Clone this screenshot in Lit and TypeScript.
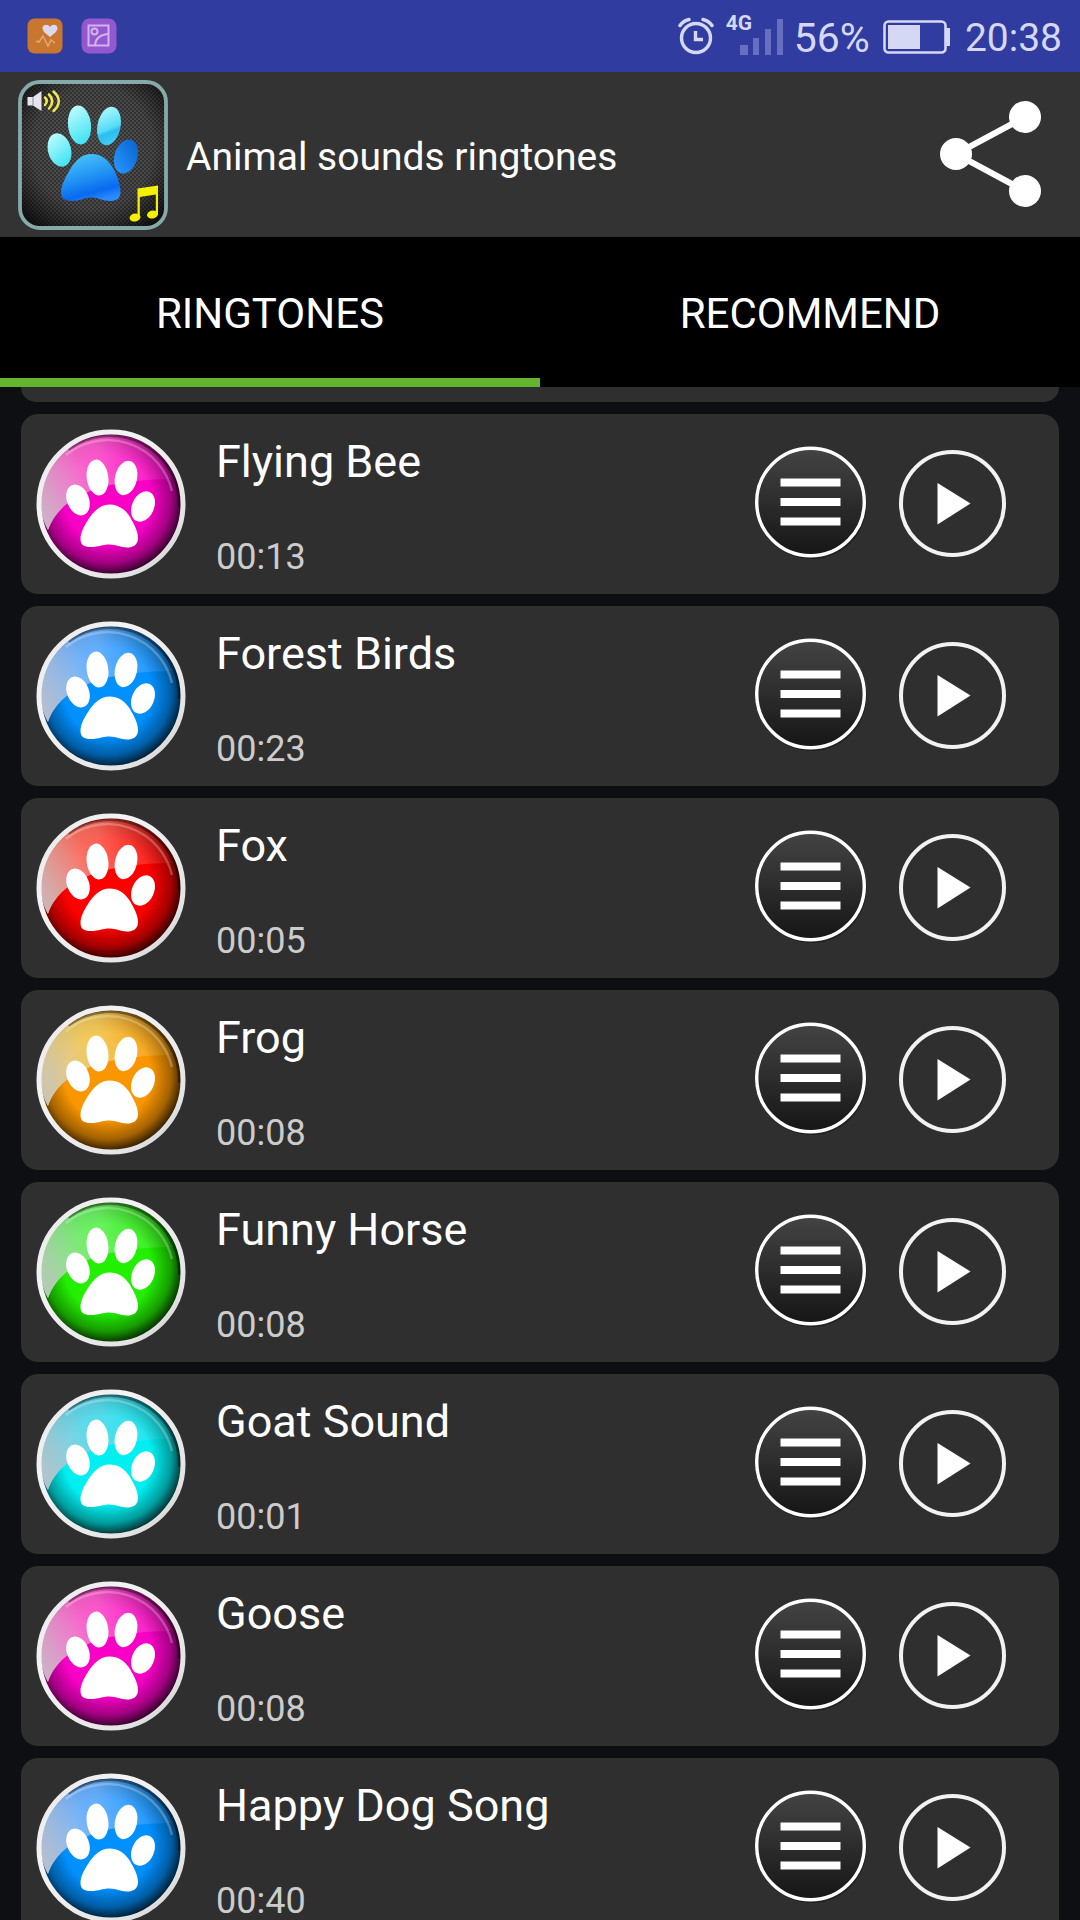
import { LitElement, html, css, svg } from "lit";
import { customElement, property, state } from "lit/decorators.js";

interface Paint {
  base: string;
  tint: string;
}

interface Sound {
  name: string;
  time: string;
  paint: Paint;
}

const MAGENTA: Paint = { base: "#f800c6", tint: "#ff7ad0" };
const BLUE: Paint = { base: "#0090ff", tint: "#8abcff" };
const RED: Paint = { base: "#fd0000", tint: "#ff8a78" };
const ORANGE: Paint = { base: "#fa9600", tint: "#f2da78" };
const GREEN: Paint = { base: "#22f000", tint: "#84f284" };
const CYAN: Paint = { base: "#00f0f2", tint: "#78d4ea" };

const SOUNDS: Sound[] = [
  { name: "Flying Bee", time: "00:13", paint: MAGENTA },
  { name: "Forest Birds", time: "00:23", paint: BLUE },
  { name: "Fox", time: "00:05", paint: RED },
  { name: "Frog", time: "00:08", paint: ORANGE },
  { name: "Funny Horse", time: "00:08", paint: GREEN },
  { name: "Goat Sound", time: "00:01", paint: CYAN },
  { name: "Goose", time: "00:08", paint: MAGENTA },
  { name: "Happy Dog Song", time: "00:40", paint: BLUE },
];

@customElement("paw-badge")
class PawBadge extends LitElement {
  @property({ attribute: false }) paint: Paint = BLUE;

  static styles = css`
    :host {
      display: block;
      flex: none;
    }
    .badge {
      display: block;
      width: 150px;
      height: 150px;
    }
  `;

  render() {
    const { base, tint } = this.paint;
    return html`<svg class="badge" viewBox="0 0 150 150" aria-hidden="true">
      <defs>
        <radialGradient id="shade" gradientUnits="userSpaceOnUse" cx="72" cy="71" r="79">
          <stop offset="0.55" stop-color="#000" stop-opacity="0"></stop>
          <stop offset="0.8" stop-color="#000" stop-opacity="0.35"></stop>
          <stop offset="1" stop-color="#000" stop-opacity="0.95"></stop>
        </radialGradient>
        <linearGradient id="gloss" gradientUnits="userSpaceOnUse" x1="8" y1="80" x2="136" y2="50">
          <stop offset="0" stop-color=${tint} stop-opacity="0.9"></stop>
          <stop offset="0.5" stop-color=${tint} stop-opacity="0.7"></stop>
          <stop offset="0.8" stop-color=${tint} stop-opacity="0.3"></stop>
          <stop offset="1" stop-color=${tint} stop-opacity="0.05"></stop>
        </linearGradient>
        <linearGradient id="haze" gradientUnits="userSpaceOnUse" x1="8" y1="90" x2="62" y2="50">
          <stop offset="0" stop-color="#c4c2c6" stop-opacity="0.8"></stop>
          <stop offset="0.4" stop-color="#c4c2c6" stop-opacity="0.5"></stop>
          <stop offset="1" stop-color="#c4c2c6" stop-opacity="0"></stop>
        </linearGradient>
        <linearGradient id="rim" x1="0" y1="0" x2="1" y2="1">
          <stop offset="0" stop-color="#e6e6e6"></stop>
          <stop offset="0.3" stop-color="#f4f4f4"></stop>
          <stop offset="0.8" stop-color="#e4e4e4"></stop>
          <stop offset="1" stop-color="#c9c9c9"></stop>
        </linearGradient>
      </defs>
      <circle cx="75" cy="75" r="71" fill=${base}></circle>
      <circle cx="75" cy="75" r="71" fill="url(#shade)"></circle>
      <path d="M12 101C24 68 62 50 141 50C133 22 106 6 75 6C36 6 5 37 5 75C5 85 8 94 12 101Z" fill="url(#gloss)"></path>
      <path d="M12 101C24 68 62 50 141 50C133 22 106 6 75 6C36 6 5 37 5 75C5 85 8 94 12 101Z" fill="url(#haze)"></path>
      <path d="M30 26A66 66 0 0 1 136 62" fill="none" stroke="#fff" stroke-opacity="0.25" stroke-width="2.5"></path>
      <path d="M32 20A70 70 0 0 1 144 78" fill="none" stroke="#000" stroke-opacity="0.4" stroke-width="4"></path>
      <circle cx="75" cy="75" r="72" fill="none" stroke="url(#rim)" stroke-width="5"></circle>
      <g fill="#fff">
        <ellipse cx="42" cy="71" rx="11" ry="16" transform="rotate(-22 42 71)"></ellipse>
        <ellipse cx="61.5" cy="48.5" rx="10.8" ry="18" transform="rotate(-8 61.5 48.5)"></ellipse>
        <ellipse cx="90" cy="49" rx="11" ry="17.5" transform="rotate(13 90 49)"></ellipse>
        <ellipse cx="107" cy="77.5" rx="11" ry="16" transform="rotate(24 107 77.5)"></ellipse>
        <path d="M73.5 75.5C82 75.5 89 80 94 88C98 95 102 102 102 109C102 116 97 118.5 91 118.5C84 118.5 81 115.5 73.5 115.5C66 115.5 63 118 55 118C48 118 44.5 116 44.5 110C44.5 104 48 97 52 91C57 83 64 75.5 73.5 75.5Z"></path>
      </g>
    </svg>`;
  }
}

@customElement("sound-row")
class SoundRow extends LitElement {
  @property({ attribute: false }) sound!: Sound;

  static styles = css`
    :host {
      display: block;
    }
    .card {
      display: flex;
      align-items: center;
      box-sizing: border-box;
      height: 180px;
      padding: 0 52px 0 15px;
      border-radius: 17px;
      background: #2f2f2f;
    }
    .text {
      flex: 1;
      min-width: 0;
      padding: 3px 0 0 30px;
    }
    .name {
      margin: 0 0 51px;
      font-size: 45px;
      line-height: 52px;
      font-weight: 400;
      color: #fff;
      white-space: nowrap;
    }
    .time {
      margin: 0;
      font-size: 36px;
      line-height: 36px;
      color: #ccc;
    }
    .actions {
      display: flex;
      align-items: center;
      gap: 32px;
    }
    .action {
      display: block;
      padding: 0;
      border: 0;
      border-radius: 50%;
      background: none;
      cursor: pointer;
    }
    .menu {
      display: block;
      width: 112px;
      height: 116px;
    }
    .play {
      display: block;
      width: 108px;
      height: 108px;
    }
  `;

  render() {
    const { name, time, paint } = this.sound;
    return html`<article class="card">
      <paw-badge .paint=${paint}></paw-badge>
      <div class="text">
        <h2 class="name">${name}</h2>
        <p class="time">${time}</p>
      </div>
      <div class="actions">
        <button class="action" aria-label="Options for ${name}">
          <svg class="menu" viewBox="0 0 112 116">
            <defs>
              <linearGradient id="face" x1="0" y1="0" x2="0" y2="1">
                <stop offset="0" stop-color="#444"></stop>
                <stop offset="1" stop-color="#151515"></stop>
              </linearGradient>
            </defs>
            <circle cx="56.5" cy="58" r="55" fill="#1c1c1c" fill-opacity="0.8"></circle>
            <circle cx="55.5" cy="56" r="53.8" fill="url(#face)" stroke="#fff" stroke-width="3.4"></circle>
            <path d="M25.5 32.5h60v8h-60zM25.5 52h60v8h-60zM25.5 71.5h60v8h-60z" fill="#fff"></path>
          </svg>
        </button>
        <button class="action" aria-label="Play ${name}">
          <svg class="play" viewBox="0 0 108 108">
            <circle cx="53.5" cy="53.5" r="51.5" fill="none" stroke="#f2f2f2" stroke-width="4"></circle>
            <path d="M38.5 33L71.5 53.5L38.5 74.5Z" fill="#fff"></path>
          </svg>
        </button>
      </div>
    </article>`;
  }
}

const alarmIcon = svg`
  <g fill="none" stroke="#d5d8f5" stroke-width="3.4" stroke-linecap="round">
    <circle cx="18" cy="21" r="14.5"></circle>
    <path d="M17.5 14V22.5H25" stroke-linecap="butt"></path>
    <path d="M2 8.5Q5 4 11 2.5M34 8.5Q31 4 25 2.5"></path>
  </g>`;

@customElement("app-root")
class AppRoot extends LitElement {
  @state() private tab = 0;

  static styles = css`
    :host {
      display: flex;
      flex-direction: column;
      height: 100vh;
      overflow: hidden;
      background: #0e0f13;
      color: #fff;
      font-family: Roboto, "Liberation Sans", sans-serif;
    }
    .status {
      display: flex;
      flex: none;
      align-items: center;
      justify-content: space-between;
      height: 72px;
      padding: 0 18px 0 27px;
      background: #303c9f;
      color: #d5d8f5;
      line-height: 48px;
    }
    .notices,
    .system {
      display: flex;
      align-items: center;
    }
    .notices {
      gap: 18px;
    }
    .notice {
      display: block;
      width: 36px;
      height: 36px;
    }
    .alarm {
      width: 36px;
      height: 38px;
      margin-right: 12px;
    }
    .network {
      display: flex;
      align-items: flex-start;
      height: 46px;
      margin-right: 10px;
    }
    .generation {
      width: 14px;
      font-size: 21px;
      line-height: 20px;
      font-weight: 700;
      white-space: nowrap;
    }
    .signal {
      width: 44px;
      height: 46px;
    }
    .percent,
    .clock {
      padding-top: 4px;
    }
    .percent {
      font-size: 41px;
    }
    .clock {
      font-size: 39px;
    }
    .battery {
      width: 68px;
      height: 34px;
      margin: 2px 14px 0 13px;
    }
    .header {
      display: flex;
      flex: none;
      align-items: center;
      height: 165px;
      padding: 0 37px 0 18px;
      background: #333;
    }
    .logo {
      flex: none;
      width: 150px;
      height: 150px;
    }
    .title {
      flex: 1;
      margin: 4px 0 0 18px;
      font-size: 39px;
      line-height: 48px;
      font-weight: 400;
    }
    .share {
      display: block;
      padding: 0;
      border: 0;
      background: none;
      cursor: pointer;
    }
    .share-icon {
      display: block;
      width: 104px;
      height: 108px;
    }
    .tabs {
      display: flex;
      flex: none;
      height: 150px;
      background: #000;
    }
    .tab {
      flex: 1;
      padding: 13px 0 0;
      border: 0;
      border-bottom: 9px solid transparent;
      background: none;
      color: #fff;
      font: 400 42px/48px Roboto, "Liberation Sans", sans-serif;
      cursor: pointer;
    }
    .tab.active {
      border-bottom-color: #62b52c;
    }
    .list {
      display: flex;
      flex: 1;
      flex-direction: column;
      gap: 12px;
      min-height: 0;
      margin: 0;
      padding: 0 21px;
      overflow: hidden;
      list-style: none;
    }
    .item {
      flex: none;
    }
    .tail {
      flex: none;
      height: 15px;
      border-radius: 0 0 16px 16px;
      background: #2f2f2f;
    }
  `;

  private renderStatus() {
    return html`<div class="status">
      <div class="notices">
        <svg class="notice" viewBox="0 0 36 36" aria-hidden="true">
          <rect x="0.5" y="0.5" width="35" height="35" rx="7" fill="#c9762f"></rect>
          <path d="M23 19C18 15 15.5 13 15.5 10C15.5 6 21 5.5 23 9C25 5.5 30.5 6 30.5 10C30.5 13 28 15 23 19Z" fill="#dcd9ee"></path>
          <path d="M9 23L12 24L16 18L21 28L24 22L28 25" fill="none" stroke="#e2a878" stroke-width="1.5"></path>
        </svg>
        <svg class="notice" viewBox="0 0 36 36" aria-hidden="true">
          <rect x="0.5" y="0.5" width="35" height="35" rx="8" fill="#9357cf"></rect>
          <g fill="none" stroke="#d3b4f0" stroke-width="2">
            <rect x="7.5" y="7.5" width="20" height="20"></rect>
            <circle cx="13.5" cy="13.5" r="3"></circle>
            <path d="M14 27Q15 17 27 16"></path>
          </g>
        </svg>
      </div>
      <div class="system">
        <svg class="alarm" viewBox="0 0 36 38" aria-hidden="true">${alarmIcon}</svg>
        <div class="network">
          <span class="generation">4G</span>
          <svg class="signal" viewBox="0 0 44 46" aria-hidden="true">
            <path d="M0 32h8v10h-8zM13 25h6v17h-6zM25 16h6v26h-6zM37 6h6v36h-6z" fill="#6770bf"></path>
          </svg>
        </div>
        <span class="percent">56%</span>
        <svg class="battery" viewBox="0 0 68 34" aria-hidden="true">
          <rect x="1.5" y="1.5" width="61" height="31" rx="4" fill="none" stroke="#d5d8f5" stroke-width="2.6"></rect>
          <rect x="5" y="5" width="32" height="24" fill="#d5d8f5"></rect>
          <path d="M63 8h4v18h-4z" fill="#d5d8f5"></path>
        </svg>
        <span class="clock">20:38</span>
      </div>
    </div>`;
  }

  private renderLogo() {
    return html`<svg class="logo" viewBox="0 0 150 150" aria-hidden="true">
      <defs>
        <pattern id="mesh" width="4" height="4" patternUnits="userSpaceOnUse">
          <circle cx="1" cy="1" r="0.9" fill="#000"></circle>
          <circle cx="3" cy="3" r="0.9" fill="#000"></circle>
        </pattern>
        <radialGradient id="plate" cx="0.5" cy="0.45" r="0.7">
          <stop offset="0" stop-color="#545454"></stop>
          <stop offset="0.6" stop-color="#484848"></stop>
          <stop offset="1" stop-color="#0a0a0a"></stop>
        </radialGradient>
        <linearGradient id="toe" x1="0" y1="0" x2="0.3" y2="1">
          <stop offset="0" stop-color="#c8ffff"></stop>
          <stop offset="1" stop-color="#48e4f4"></stop>
        </linearGradient>
        <linearGradient id="toe-mid" x1="0.2" y1="0" x2="0.6" y2="1">
          <stop offset="0" stop-color="#b0fbff"></stop>
          <stop offset="0.6" stop-color="#56dcf6"></stop>
          <stop offset="0.7" stop-color="#2cbcf0"></stop>
          <stop offset="1" stop-color="#40ccf4"></stop>
        </linearGradient>
        <linearGradient id="toe-end" x1="0.8" y1="0" x2="0.2" y2="1">
          <stop offset="0" stop-color="#0a62d0"></stop>
          <stop offset="1" stop-color="#2598ff"></stop>
        </linearGradient>
        <linearGradient id="pad" x1="0.3" y1="0" x2="0.65" y2="1">
          <stop offset="0" stop-color="#48c4fa"></stop>
          <stop offset="0.45" stop-color="#2396f4"></stop>
          <stop offset="0.8" stop-color="#0a6af0"></stop>
          <stop offset="1" stop-color="#2a8cff"></stop>
        </linearGradient>
      </defs>
      <rect x="2" y="2" width="146" height="146" rx="20" fill="url(#plate)"></rect>
      <rect x="2" y="2" width="146" height="146" rx="20" fill="url(#mesh)" opacity="0.5"></rect>
      <rect x="2" y="2" width="146" height="146" rx="20" fill="none" stroke="#86aaa9" stroke-width="3.8"></rect>
      <ellipse cx="41.5" cy="70" rx="11.5" ry="17" transform="rotate(-15 41.5 70)" fill="url(#toe)"></ellipse>
      <ellipse cx="61.5" cy="45" rx="11.5" ry="19.5" transform="rotate(-6 61.5 45)" fill="url(#toe)"></ellipse>
      <ellipse cx="91" cy="46" rx="11.5" ry="19.5" transform="rotate(12 91 46)" fill="url(#toe-mid)"></ellipse>
      <ellipse cx="108" cy="76.5" rx="11.5" ry="17.5" transform="rotate(17 108 76.5)" fill="url(#toe-end)"></ellipse>
      <path d="M73.5 74C84 74 90 80 95 88C99 95 102.5 104 102.5 112C102.5 119 98 121 92 121C85 121 80 117.5 73.5 117.5C67 117.5 62 121 54 121C46 121 43 118 43 112C43 105 48 96 53 88C58 80 64 74 73.5 74Z" fill="url(#pad)"></path>
      <path d="M9.5 17H15L23.5 11V31L15 25.5H9.5Z" fill="#e4e4ea"></path>
      <path d="M15 17V25.5" stroke="#8c8c94"></path>
      <g fill="none" stroke="#f2ea4a" stroke-width="2.5" stroke-linecap="round">
        <path d="M27 17.5Q30.5 21 27 25"></path>
        <path d="M31 14.5Q37.5 21 31 28.5"></path>
        <path d="M35.5 11.5Q46 21 35.5 31"></path>
      </g>
      <g fill="#f5f000">
        <ellipse cx="117" cy="137.500" rx="5.5" ry="4" transform="rotate(-10 117 137.5)"></ellipse>
        <ellipse cx="134.5" cy="134.5" rx="5.5" ry="4" transform="rotate(-10 134.5 134.5)"></ellipse>
        <path d="M119.5 108.5L140 105.5V135H137.8V114.5L121.8 117V138H119.5Z"></path>
      </g>
    </svg>`;
  }

  render() {
    return html`
      ${this.renderStatus()}
      <header class="header">
        ${this.renderLogo()}
        <h1 class="title">Animal sounds ringtones</h1>
        <button class="share" aria-label="Share">
          <svg class="share-icon" viewBox="0 0 104 108">
            <path d="M86 16L17 53L86 90" fill="none" stroke="#fff" stroke-width="6"></path>
            <circle cx="86" cy="16" r="16" fill="#fff"></circle>
            <circle cx="17" cy="53" r="16" fill="#fff"></circle>
            <circle cx="86" cy="90" r="16" fill="#fff"></circle>
          </svg>
        </button>
      </header>
      <nav class="tabs">
        ${["RINGTONES", "RECOMMEND"].map(
          (label, i) => html`<button
            class="tab ${this.tab === i ? "active" : ""}"
            @click=${() => (this.tab = i)}
          >${label}</button>`,
        )}
      </nav>
      <ul class="list">
        <li class="tail" aria-hidden="true"></li>
        ${SOUNDS.map((s) => html`<li class="item"><sound-row .sound=${s}></sound-row></li>`)}
      </ul>
    `;
  }
}
